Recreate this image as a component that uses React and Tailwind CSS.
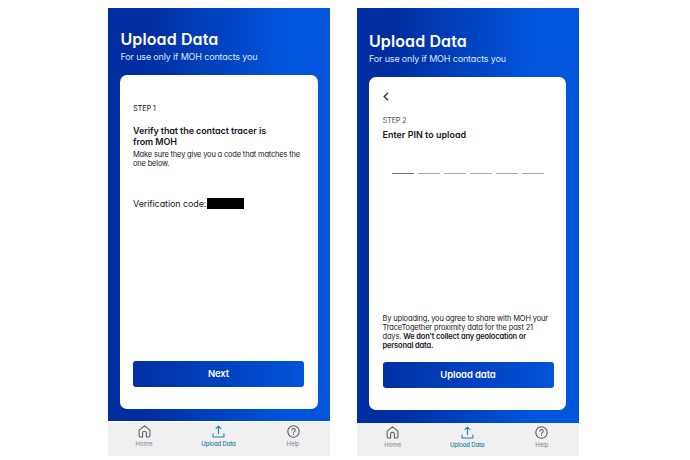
const inter = "font-['Inter','Liberation_Sans',sans-serif] [font-feature-settings:'cv11','ss03']";

function HomeIcon() {
  return (
    <svg viewBox="0 0 24 24" className="block h-[13px] w-[13px]" fill="none" stroke="currentColor" strokeWidth="1.900" strokeLinejoin="round">
      <path d="M2 9.500 12 1.500l10 8V20a2 2 0 0 1-2 2h-4.500v-7a3.500 3.500 0 0 0-7 0v7H4a2 2 0 0 1-2-2Z" />
    </svg>
  );
}

function UploadIcon() {
  return (
    <svg viewBox="0 0 24 24" className="block h-[13px] w-[13px]" fill="none" stroke="currentColor" strokeWidth="2" strokeLinecap="round" strokeLinejoin="round">
      <path d="M12 16V2M7.500 6.500 12 2l4.500 4.500M2 16v6h20v-6" />
    </svg>
  );
}

function HelpIcon() {
  return (
    <svg viewBox="0 0 24 24" className="block h-[13px] w-[13px]" fill="none" stroke="currentColor" strokeWidth="1.900" strokeLinecap="round">
      <circle cx="12" cy="12" r="10.500" />
      <path d="M9 9.500a3.100 3.100 0 1 1 4.600 2.700c-1.100.6-1.600 1-1.600 2M12 17.300v.2" />
    </svg>
  );
}

function Nav({ className }) {
  return (
    <nav className={`grid grid-cols-3 bg-[#f0f0f0] text-[6px] leading-[8px] text-[#85858a] ${className}`}>
      <div className="flex flex-col items-center gap-[2px] pr-[2px]">
        <span className="text-[#55565e]"><HomeIcon /></span>
        <span>Home</span>
      </div>
      <div className="flex flex-col items-center gap-[2px] pr-[1px] font-medium text-[#267da8]">
        <UploadIcon />
        <span className="whitespace-nowrap tracking-[-0.15px]">Upload Data</span>
      </div>
      <div className="flex flex-col items-center gap-[2px]">
        <span className="text-[#55565e]"><HelpIcon /></span>
        <span>Help</span>
      </div>
    </nav>
  );
}

function Header() {
  return (
    <header className="whitespace-nowrap pl-[12.500px] text-white">
      <h1 className="text-[16px] font-semibold leading-[20px] tracking-[0.1px]">Upload Data</h1>
      <p className="text-[9px] leading-[16px] tracking-[-0.16px] text-[#dce8ff]">For use only if MOH contacts you</p>
    </header>
  );
}

function Button({ children }) {
  return (
    <button className="block h-[26px] w-[171px] rounded-[3px] bg-linear-to-r from-[#0230a4] to-[#0053d8] text-[9.500px] font-semibold leading-[26px] tracking-[-0.1px] text-white">
      {children}
    </button>
  );
}

export default function App() {
  return (
    <main className={`flex h-[460px] w-[690px] items-start overflow-hidden bg-white pl-[108px] pt-[8px] text-[#18181c] ${inter}`}>
      <section className="h-[448px] w-[222px] shrink-0">
        <div className="h-[413px] bg-linear-to-r from-[#002d9f] from-15% to-[#0055dc] to-80% pt-[21px]">
          <Header />
          <div className="ml-[12px] mt-[10px] flex h-[334px] w-[198px] flex-col whitespace-nowrap rounded-[7px] bg-white pl-[13px] pt-[28px]">
            <p className="text-[7.500px] leading-[12px] tracking-[-0.25px]">STEP 1</p>
            <h2 className="mt-[10px] text-[9px] font-semibold leading-[11px] tracking-[-0.09px]">Verify that the contact tracer is<br />from MOH</h2>
            <p className="mt-[4px] text-[7.500px] leading-[8.700px] tracking-[-0.18px]">Make sure they give you a code that matches the<br />one below.</p>
            <div className="mt-[29px] flex h-[14px] items-center">
              <span className="w-[74px] text-[9px] leading-[14px] tracking-[-0.1px]">Verification code:</span>
              <span className="mt-[-1px] h-[11px] w-[37px] bg-black" />
            </div>
            <div className="mb-[22px] mt-auto"><Button>Next</Button></div>
          </div>
        </div>
        <Nav className="mt-px h-[34px] pt-[3px]" />
      </section>
      <section className="ml-[26.500px] h-[448px] w-[222.500px] shrink-0">
        <div className="h-[415px] bg-linear-to-r from-[#002d9f] from-15% to-[#0055dc] to-80% pt-[23px]">
          <Header />
          <div className="ml-[12.500px] mt-[10px] flex h-[333px] w-[197px] flex-col whitespace-nowrap rounded-[7px] bg-white pl-[13.500px] pt-[15px]">
            <svg viewBox="0 0 6 9" className="block h-[9px] w-[6px]" fill="none" stroke="#292958" strokeWidth="1.300">
              <path d="M5 .7 1.200 4.500 5 8.300" />
            </svg>
            <p className="mt-[14px] text-[7.500px] leading-[12px] tracking-[-0.3px] text-[#55555b]">STEP 2</p>
            <h2 className="mt-[1px] text-[9px] font-semibold leading-[13px]">Enter PIN to upload</h2>
            <div className="ml-[9.500px] mt-[32px] flex gap-[4.500px]">
              <span className="h-px w-[21.500px] bg-[#777]" />
              {[0, 1, 2, 3, 4].map((n) => <span key={n} className="h-px w-[21.500px] bg-[#aaa]" />)}
            </div>
            <p className="mb-[11px] mt-auto text-[7.500px] leading-[8.900px] tracking-[-0.16px]">
              By uploading, you agree to share with MOH your<br />TraceTogether proximity data for the past 21<br />days. <strong className="font-semibold">We don't collect any geolocation or<br />personal data.</strong>
            </p>
            <div className="mb-[22px]"><Button>Upload data</Button></div>
          </div>
        </div>
        <Nav className="h-[33px] pt-[2.500px]" />
      </section>
    </main>
  );
}
